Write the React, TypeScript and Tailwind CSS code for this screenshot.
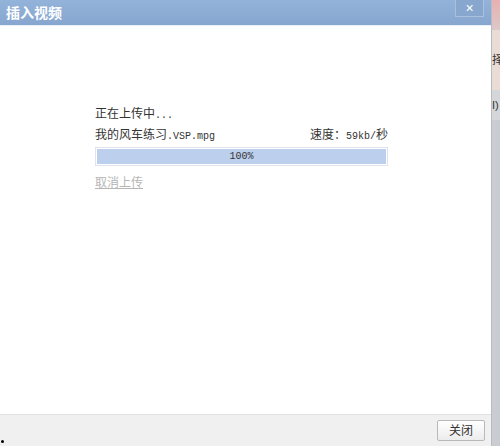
const mono = "font-['Liberation_Mono',monospace] text-[10px]";

export default function App() {
  return (
    <div
      className="flex h-[446px] w-[500px] overflow-hidden bg-white text-[12px] text-[#333]"
      style={{ fontFamily: '"Liberation Sans", "Noto Sans CJK SC", sans-serif' }}
    >
      {/* Dialog */}
      <div className="flex w-[492px] flex-col border-r border-[#b8bcc2]">
        {/* Title bar */}
        <div className="flex h-[25px] shrink-0 items-start justify-between bg-gradient-to-b from-[#93b3da] to-[#86a6cf] pl-[6px] pr-[7px]">
          <span className="pt-[5px] text-[14px] font-bold leading-[16px] text-white">插入视频</span>
          <button className="flex h-[17px] w-[29px] items-center justify-center border border-t-0 border-[#a9c0de] bg-[#87a7cf] text-[14px] leading-none text-white">
            ×
          </button>
        </div>

        {/* Body */}
        <div className="flex flex-1 flex-col border-t border-[#eaf0f7] pl-[95px] pt-[80px]">
          <div className="w-[293px]">
            <p className="leading-[16px]">
              正在上传中<span className={mono}>...</span>
            </p>
            <div className="mt-[3px] flex items-center justify-between leading-[16px]">
              <span>
                我的风车练习<span className={mono}>.VSP.mpg</span>
              </span>
              <span>
                速度：<span className={mono}>59kb/</span>秒
              </span>
            </div>
            <div className="mt-[2px] h-[19px] border border-[#dfe4ec] bg-white p-px">
              <div className={`flex h-full w-full items-center justify-center bg-[#bccfec] leading-none ${mono}`}>
                100%
              </div>
            </div>
            <a className="mt-[9px] inline-block leading-[16px] text-[#b5b5b5] underline">取消上传</a>
          </div>
        </div>

        {/* Footer */}
        <div className="relative flex h-[32px] shrink-0 items-center justify-end border-t border-[#e2e2e2] bg-[#f0f0f0] pr-[6px]">
          <span className="absolute bottom-[3px] left-[1px] h-[3px] w-[3px] rounded-full bg-black" />
          <button className="h-[21px] w-[48px] rounded-[2px] border border-[#b9b9b9] bg-gradient-to-b from-white to-[#ececec] text-[12px] leading-none text-[#333]">
            关闭
          </button>
        </div>
      </div>

      {/* Underlying page strip */}
      <div className="flex w-[8px] flex-col bg-[#c9cdd2]">
        <div className="h-[30px] bg-gradient-to-b from-[#e7b0b0] to-[#dcc8c8]" />
        <div className="h-[60px] overflow-hidden bg-[#e8dcd4] text-[11px] leading-[60px] text-[#333]">择</div>
        <div className="h-[30px] overflow-hidden bg-[#d4d6d9] text-[11px] leading-[30px] text-[#333]">I)</div>
        <div className="flex-1" />
      </div>
    </div>
  );
}
